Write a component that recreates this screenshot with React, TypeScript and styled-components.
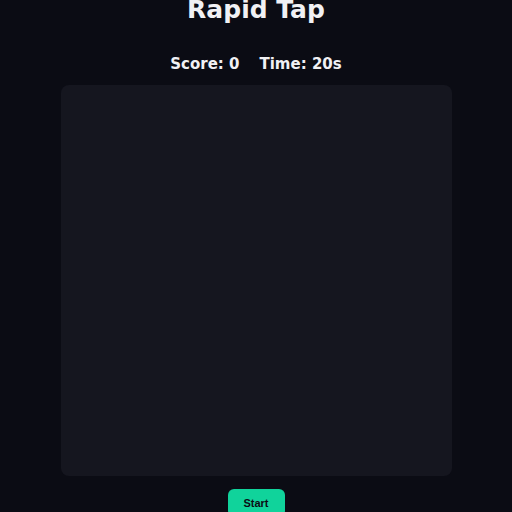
import React, { useState } from 'react';
import styled, { createGlobalStyle } from 'styled-components';

const GlobalStyle = createGlobalStyle`
  html, body {
    margin: 0;
    padding: 0;
    background: #0b0c14;
  }
  body {
    font-family: "DejaVu Sans", sans-serif;
    color: #f1f1f4;
  }
`;

const Page = styled.div`
  display: flex;
  flex-direction: column;
  align-items: center;
  min-height: 512px;
`;

const Title = styled.h1`
  margin: -6px 0 0;
  font-size: 25px;
  font-weight: bold;
  line-height: 32px;
`;

const Stats = styled.div`
  display: flex;
  gap: 20px;
  margin-top: 28px;
  font-size: 15px;
  font-weight: bold;
  line-height: 20px;
`;

const Board = styled.div`
  width: 391px;
  height: 391px;
  margin-top: 11px;
  background: #15161f;
  border-radius: 8px;
`;

const StartButton = styled.button`
  margin-top: 13px;
  width: 57px;
  height: 28px;
  border: none;
  border-radius: 6px;
  background: #10d39b;
  color: #0b0c14;
  font-family: "Liberation Sans", Arial, sans-serif;
  font-size: 11px;
  font-weight: bold;
  cursor: pointer;
`;

export default function App() {
  const [score] = useState(0);
  const [time] = useState(20);

  return (
    <Page>
      <GlobalStyle />
      <Title>Rapid Tap</Title>
      <Stats>
        <span>Score: {score}</span>
        <span>Time: {time}s</span>
      </Stats>
      <Board />
      <StartButton>Start</StartButton>
    </Page>
  );
}
